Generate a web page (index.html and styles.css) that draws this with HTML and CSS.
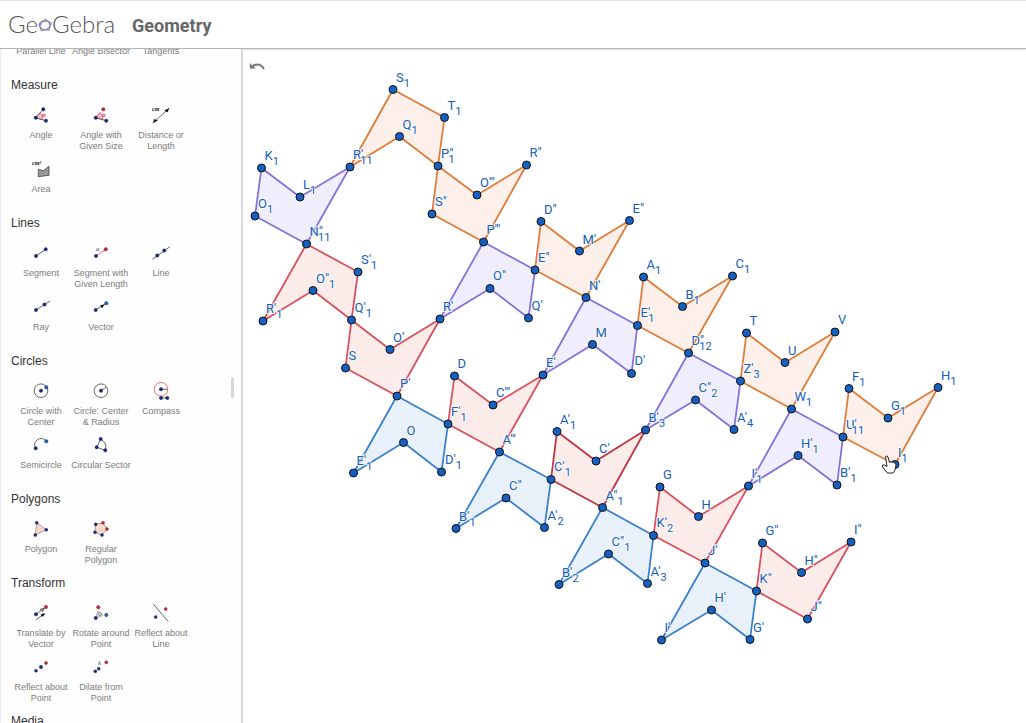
FILE: index.html
```html
<!DOCTYPE html>
<html lang="en">
<head>
<meta charset="utf-8">
<title>GeoGebra Geometry</title>
<link rel="stylesheet" href="styles.css">
</head>
<body>
<header class="topbar">
  <a class="logo" href="#" aria-label="GeoGebra"><span>Ge</span><svg class="logo-mark" viewBox="0 0 14 14" aria-hidden="true"><ellipse cx="7" cy="7.3" rx="5.3" ry="4.6" transform="rotate(-12 7 7.3)"/><circle cx="7.600" cy="2.300" r="1.400"/><circle cx="12.200" cy="5.400" r="1.400"/><circle cx="10.300" cy="11.200" r="1.400"/><circle cx="3.900" cy="11.700" r="1.400"/><circle cx="2" cy="6.200" r="1.400"/></svg><span>Gebra</span></a>
  <h1 class="title">Geometry</h1>
</header>
<div class="workspace">
  <aside class="sidebar">
    <div class="tools">
      <section class="group">
        <div class="grid">
          <button class="tool"><svg class="icon" viewBox="0 0 24 24"></svg>Parallel Line</button>
          <button class="tool"><svg class="icon" viewBox="0 0 24 24"></svg>Angle Bisector</button>
          <button class="tool"><svg class="icon" viewBox="0 0 24 24"></svg>Tangents</button>
        </div>
      </section>
      <section class="group">
        <h2 class="heading">Measure</h2>
        <div class="grid">
          <button class="tool"><svg class="icon" viewBox="0 0 24 24"><path class="pink" d="M6.700 14.700 11 9.500Q14.500 12 13.500 16.800Z"/><path class="ln" d="M14.300 6.300 6.700 14.700 17 17.700"/><circle class="ring" cx="15" cy="12.300" r="1.200"/><circle class="b" cx="14.300" cy="6.300" r="1.700"/><circle class="b" cx="6.700" cy="14.700" r="1.700"/><circle class="b" cx="17" cy="17.700" r="1.700"/></svg>Angle</button>
          <button class="tool"><svg class="icon" viewBox="0 0 24 24"><path class="pink" d="M6.700 14.700 11 9.500Q14.500 12 13.500 16.800Z"/><path class="ln" d="M6.700 14.700 17.300 17.700"/><circle class="ring" cx="15" cy="12.300" r="1.200"/><circle class="r" cx="14.300" cy="6.300" r="1.700"/><circle class="b" cx="6.700" cy="14.700" r="1.700"/><circle class="b" cx="17.300" cy="17.700" r="1.700"/></svg>Angle with Given Size</button>
          <button class="tool"><svg class="icon" viewBox="0 0 24 24"><path class="ln" d="M3.700 20.300 20.300 5"/><path class="k" d="M4 20 5.200 15.900 8.900 17.600ZM20 5.200 18.800 9.200 15.200 7.500Z"/><text class="unit" x="3" y="8">cm</text></svg>Distance or Length</button>
          <button class="tool"><svg class="icon" viewBox="0 0 24 24"><path class="area" d="M9.300 12.300 14.300 13.700 20 9.300V18.300L9.300 19.700Z"/><text class="unit" x="3" y="8">cm²</text></svg>Area</button>
        </div>
      </section>
      <section class="group">
        <h2 class="heading">Lines</h2>
        <div class="grid">
          <button class="tool"><svg class="icon" viewBox="0 0 24 24"><path class="ln" d="M7 15 16.700 8.300"/><circle class="b" cx="7" cy="15" r="1.700"/><circle class="b" cx="16.700" cy="8.300" r="1.700"/></svg>Segment</button>
          <button class="tool"><svg class="icon" viewBox="0 0 24 24"><path class="pl" d="M7 15 16.700 8.300"/><circle class="b" cx="7" cy="15" r="1.700"/><circle class="r" cx="16.700" cy="8.300" r="1.700"/><text class="sym" x="7" y="10">a</text></svg>Segment with Given Length</button>
          <button class="tool"><svg class="icon" viewBox="0 0 24 24"><path class="ln" d="M3.300 18.300 21 5.700"/><circle class="b" cx="8.300" cy="14.500" r="1.700"/><circle class="b" cx="15.300" cy="9.500" r="1.700"/></svg>Line</button>
          <button class="tool"><svg class="icon" viewBox="0 0 24 24"><path class="ln" d="M7 15 21 6"/><circle class="b" cx="7" cy="15" r="1.700"/><circle class="b" cx="15.500" cy="9.500" r="1.700"/></svg>Ray</button>
          <button class="tool"><svg class="icon" viewBox="0 0 24 24"><path class="ln" d="M6.700 15 17.300 8.300"/><path class="k" d="M15.500 9.500 13.200 13.300 11 10.300Z"/><circle class="b" cx="6.700" cy="15" r="1.700"/><circle class="b2" cx="17.300" cy="8.300" r="1.700"/></svg>Vector</button>
        </div>
      </section>
      <section class="group">
        <h2 class="heading">Circles</h2>
        <div class="grid">
          <button class="tool"><svg class="icon" viewBox="0 0 24 24"><circle class="ln" cx="12" cy="11.700" r="6.800"/><circle class="b" cx="12" cy="11.700" r="1.700"/><circle class="b2" cx="17.300" cy="8.300" r="1.700"/></svg>Circle with Center</button>
          <button class="tool"><svg class="icon" viewBox="0 0 24 24"><circle class="ln" cx="12" cy="11.700" r="6.800"/><path class="ln" d="M12 11.700 17.300 8"/><circle class="b" cx="12" cy="11.700" r="1.700"/></svg>Circle: Center &amp; Radius</button>
          <button class="tool"><svg class="icon" viewBox="0 0 24 24"><circle class="rl" cx="12" cy="10.300" r="6.800"/><path class="ln" d="M12 10.300H18.800M12 19H18.300"/><circle class="b" cx="12" cy="10.300" r="1.700"/><circle class="b" cx="12" cy="19" r="1.700"/><circle class="b" cx="18.300" cy="19" r="1.700"/></svg>Compass</button>
          <button class="tool"><svg class="icon" viewBox="0 0 24 24"><path class="ln" d="M6.700 15.300A6.300 6.300 0 0 1 17.300 8.300"/><circle class="b" cx="6.700" cy="15.300" r="1.700"/><circle class="b2" cx="17.300" cy="8.300" r="1.700"/></svg>Semicircle</button>
          <button class="tool"><svg class="icon" viewBox="0 0 24 24"><path class="ln" d="M11.700 6 7.700 14.300 16.300 17.300Q18.500 10 11.700 6Z"/><circle class="b" cx="11.700" cy="6" r="1.700"/><circle class="b" cx="7.700" cy="14.300" r="1.700"/><circle class="b" cx="16.300" cy="17.300" r="1.700"/></svg>Circular Sector</button>
        </div>
      </section>
      <section class="group">
        <h2 class="heading">Polygons</h2>
        <div class="grid">
          <button class="tool"><svg class="icon" viewBox="0 0 24 24"><path class="peach" d="M7.700 5.700 17.300 12.700 6.300 18Z"/><circle class="b" cx="7.700" cy="5.700" r="1.500"/><circle class="b" cx="17.300" cy="12.700" r="1.500"/><circle class="b" cx="6.300" cy="18" r="1.500"/></svg>Polygon</button>
          <button class="tool"><svg class="icon" viewBox="0 0 24 24"><path class="peach" d="M6.700 7.300 14 5.700 18 12 13 18 6 15.300Z"/><circle class="b" cx="6.700" cy="7.300" r="1.500"/><circle class="r" cx="14" cy="5.700" r="1.500"/><circle class="r" cx="18" cy="12" r="1.500"/><circle class="b" cx="13" cy="18" r="1.500"/><circle class="b" cx="6" cy="15.300" r="1.500"/></svg>Regular Polygon</button>
        </div>
      </section>
      <section class="group">
        <h2 class="heading">Transform</h2>
        <div class="grid">
          <button class="tool"><svg class="icon" viewBox="0 0 24 24"><path class="ln" d="M7 13.300 17 6M7 18.700 15.500 12.700"/><path class="area" d="M15 7.500 13.500 10.600 11.300 8.200Z"/><path class="k" d="M16.300 12.200 13.800 16 11.500 13.300Z"/><circle class="b" cx="7" cy="13.300" r="1.700"/><circle class="r" cx="17" cy="6" r="1.700"/></svg>Translate by Vector</button>
          <button class="tool"><svg class="icon" viewBox="0 0 24 24"><path class="angle" d="M6.700 17 8.500 10.500Q13 11 13.500 15Z"/><circle class="ring2" cx="11" cy="13" r="1.500"/><circle class="r" cx="9.300" cy="6.300" r="1.700"/><circle class="b" cx="6.700" cy="17" r="1.700"/><circle class="b2" cx="17.300" cy="14" r="1.700"/></svg>Rotate around Point</button>
          <button class="tool"><svg class="icon" viewBox="0 0 24 24"><path class="ln" d="M4.300 3 19.300 20.700"/><circle class="r" cx="16.700" cy="8" r="1.500"/><circle class="b" cx="6.700" cy="16" r="1.500"/></svg>Reflect about Line</button>
          <button class="tool"><svg class="icon" viewBox="0 0 24 24"><circle class="b" cx="7" cy="15.700" r="1.500"/><circle class="b" cx="12" cy="12" r="1.700"/><circle class="r" cx="17" cy="8" r="1.500"/></svg>Reflect about Point</button>
          <button class="tool"><svg class="icon" viewBox="0 0 24 24"><text class="sym" x="9" y="10">k</text><circle class="b" cx="6.300" cy="16.300" r="1.500"/><circle class="b" cx="9.700" cy="13.700" r="1.500"/><circle class="r" cx="17.300" cy="7.300" r="1.500"/></svg>Dilate from Point</button>
        </div>
      </section>
      <section class="group">
        <h2 class="heading">Media</h2>
      </section>
    </div>
    <span class="thumb"></span>
  </aside>
  <main class="canvas">
    <button class="undo" aria-label="Undo"><svg viewBox="0 0 16 9"><path d="M.5 1 1.200 6.800 6.800 6.300 4.800 4.600C8.500 2.300 12.300 3.600 14 7.600L15.800 7C13.500 1.300 8 0 3.200 3.200Z"/></svg></button>
    <svg class="drawing" role="img" aria-label="Tessellation of concave pentagons">
      <g transform="translate(-243 -49)">
        <g class="orange">
          <path d="M393 89.500 444.500 117.500 438 166 399.500 136.500 350 167Z"/>
          <path d="M438 166 477 195 526.500 165 483.500 242 432 214Z"/>
          <path d="M541 221.500 579.500 251 629.500 220.500 586 297.500 535 270Z"/>
          <path d="M643.500 277 682.500 306.500 732.500 276 688.500 353 637.500 325.500Z"/>
          <path d="M746.500 333 785 362.500 835 332 791.500 409 740.500 381Z"/>
          <path d="M849 388.500 888 418 938 387.500 895 464.500 843 437Z"/>
        </g>
        <g class="purple">
          <path d="M261.500 168 300 197 350 167 306.500 244 255 216Z"/>
          <path d="M483.500 242 535 270 528.500 318 490 288.500 440 319Z"/>
          <path d="M586 297.500 637.500 325.500 631.500 373.500 592.500 344.500 543 375Z"/>
          <path d="M688.500 353 740.500 381 734 429.500 695.500 400 645.500 430Z"/>
          <path d="M791.500 409 843 437 837 485 798 455.500 748.500 486Z"/>
        </g>
        <g class="red">
          <path d="M306.500 244 358 272 351.500 320 313 290.500 263 321Z"/>
          <path d="M351.500 320 390 349.500 440 319 397 396 345.500 368Z"/>
          <path d="M454.500 376 493 405 543 375 499.500 452 448 424Z"/>
          <path d="M660 487 698.500 516.500 748.500 486 705 563 653.500 535.500Z"/>
          <path d="M762.500 543 801.500 572.500 851 542 807.500 619 756.500 591Z"/>
          <path class="dark" d="M557 431.500 596 461 645.500 430 602.500 507.500 551 479.500Z"/>
        </g>
        <g class="blue">
          <path d="M397 396 448 424 441.500 472 403.500 442.500 353.500 473Z"/>
          <path d="M499.500 452 551 479.500 544.500 527.500 506 498 456 528.500Z"/>
          <path d="M602.500 507.500 653.500 535.500 647.500 583.500 608.500 554 559 584.500Z"/>
          <path d="M705 563 756.500 591 750 639.500 711.500 610 661.500 640Z"/>
        </g>
        <g class="labels">
          <text x="396" y="82">S<tspan dy="5">1</tspan></text>
          <text x="447.500" y="110">T<tspan dy="5">1</tspan></text>
          <text x="402.500" y="129">Q<tspan dy="5">1</tspan></text>
          <text x="353" y="159">R'<tspan dy="5" dx="-3">11</tspan></text>
          <text x="441" y="158">P"<tspan dy="5" dx="-5">1</tspan></text>
          <text x="264.500" y="160">K<tspan dy="5">1</tspan></text>
          <text x="303" y="189">L<tspan dy="5">1</tspan></text>
          <text x="258" y="208">O<tspan dy="5">1</tspan></text>
          <text x="309.500" y="236">N"<tspan dy="5" dx="-5">11</tspan></text>
          <text x="435" y="206">S"</text>
          <text x="361" y="264">S'<tspan dy="5">1</tspan></text>
          <text x="316" y="283">O"<tspan dy="5">1</tspan></text>
          <text x="266" y="313">R'<tspan dy="5">1</tspan></text>
          <text x="354.500" y="312">Q'<tspan dy="5">1</tspan></text>
          <text x="393" y="342">O'</text>
          <text x="443" y="311">R'</text>
          <text x="348.500" y="360">S</text>
          <text x="400" y="388">P'</text>
          <text x="457.500" y="368">D</text>
          <text x="451" y="416">F'<tspan dy="5">1</tspan></text>
          <text x="406.500" y="435">O</text>
          <text x="356.500" y="465">E'<tspan dy="5">1</tspan></text>
          <text x="445" y="464">D'<tspan dy="5">1</tspan></text>
          <text x="529.500" y="157">R"</text>
          <text x="480" y="187">O'"</text>
          <text x="486.500" y="234">P'"</text>
          <text x="544" y="214">D"</text>
          <text x="632.500" y="213">E"</text>
          <text x="582.500" y="244">M'</text>
          <text x="538" y="262">E"</text>
          <text x="493" y="280">O"</text>
          <text x="531.500" y="310">Q'</text>
          <text x="589" y="290">N'</text>
          <text x="646.500" y="269">A<tspan dy="5">1</tspan></text>
          <text x="640.500" y="317">E'<tspan dy="5" dx="-2">1</tspan></text>
          <text x="595.500" y="337">M</text>
          <text x="496" y="397">C'"</text>
          <text x="546" y="367">E'</text>
          <text x="634.500" y="365">D'</text>
          <text x="502.500" y="444">A'"</text>
          <text x="560" y="424">A'<tspan dy="5">1</tspan></text>
          <text x="599" y="453">C'</text>
          <text x="648.500" y="422">B'<tspan dy="5">3</tspan></text>
          <text x="554" y="471">C'<tspan dy="5">1</tspan></text>
          <text x="605.500" y="500">A"<tspan dy="5">1</tspan></text>
          <text x="509" y="490">C"</text>
          <text x="459" y="521">B'<tspan dy="5">1</tspan></text>
          <text x="547.500" y="520">A'<tspan dy="5">2</tspan></text>
          <text x="663" y="479">G</text>
          <text x="656.500" y="527">K'<tspan dy="5">2</tspan></text>
          <text x="611.500" y="546">C"<tspan dy="5">1</tspan></text>
          <text x="562" y="577">B'<tspan dy="5">2</tspan></text>
          <text x="650.500" y="576">A'<tspan dy="5">3</tspan></text>
          <text x="685.500" y="299">B<tspan dy="5">1</tspan></text>
          <text x="735.500" y="268">C<tspan dy="5">1</tspan></text>
          <text x="691.500" y="345">D"<tspan dy="5" dx="-5">12</tspan></text>
          <text x="743.500" y="373">Z'<tspan dy="5">3</tspan></text>
          <text x="698.500" y="392">C"<tspan dy="5">2</tspan></text>
          <text x="737" y="422">A'<tspan dy="5">4</tspan></text>
          <text x="749.500" y="325">T</text>
          <text x="788" y="355">U</text>
          <text x="838" y="324">V</text>
          <text x="794.500" y="401">W<tspan dy="5">1</tspan></text>
          <text x="801" y="448">H'<tspan dy="5">1</tspan></text>
          <text x="751.500" y="478">I'<tspan dy="5" dx="-1">1</tspan></text>
          <text x="846" y="429">U'<tspan dy="5" dx="-5">11</tspan></text>
          <text x="840" y="477">B'<tspan dy="5">1</tspan></text>
          <text x="701.500" y="509">H</text>
          <text x="708" y="555">J'</text>
          <text x="765.500" y="535">G"</text>
          <text x="804.500" y="565">H"</text>
          <text x="854" y="534">I"</text>
          <text x="759.500" y="583">K"</text>
          <text x="810.500" y="611">J"</text>
          <text x="714.500" y="602">H'</text>
          <text x="753" y="632">G'</text>
          <text x="664.500" y="632">I'</text>
          <text x="852" y="381">F<tspan dy="5">1</tspan></text>
          <text x="891" y="410">G<tspan dy="5">1</tspan></text>
          <text x="941" y="380">H<tspan dy="5">1</tspan></text>
          <text x="898" y="457">I<tspan dy="5">1</tspan></text>
        </g>
        <g class="points">
          <circle cx="393" cy="89.500" r="4"/><circle cx="444.500" cy="117.500" r="4"/><circle cx="399.500" cy="136.500" r="4"/>
          <circle cx="350" cy="167" r="4"/><circle cx="438" cy="166" r="4"/><circle cx="261.500" cy="168" r="4"/>
          <circle cx="300" cy="197" r="4"/><circle cx="255" cy="216" r="4"/><circle cx="306.500" cy="244" r="4"/>
          <circle cx="432" cy="214" r="4"/><circle cx="358" cy="272" r="4"/><circle cx="313" cy="290.500" r="4"/>
          <circle cx="263" cy="321" r="4"/><circle cx="351.500" cy="320" r="4"/><circle cx="390" cy="349.500" r="4"/>
          <circle cx="440" cy="319" r="4"/><circle cx="345.500" cy="368" r="4"/><circle cx="397" cy="396" r="4"/>
          <circle cx="454.500" cy="376" r="4"/><circle cx="448" cy="424" r="4"/><circle cx="403.500" cy="442.500" r="4"/>
          <circle cx="353.500" cy="473" r="4"/><circle cx="441.500" cy="472" r="4"/><circle cx="526.500" cy="165" r="4"/>
          <circle cx="477" cy="195" r="4"/><circle cx="483.500" cy="242" r="4"/><circle cx="541" cy="221.500" r="4"/>
          <circle cx="629.500" cy="220.500" r="4"/><circle cx="579.500" cy="251" r="4"/><circle cx="535" cy="270" r="4"/>
          <circle cx="490" cy="288.500" r="4"/><circle cx="528.500" cy="318" r="4"/><circle cx="586" cy="297.500" r="4"/>
          <circle cx="643.500" cy="277" r="4"/><circle cx="637.500" cy="325.500" r="4"/><circle cx="592.500" cy="344.500" r="4"/>
          <circle cx="493" cy="405" r="4"/><circle cx="543" cy="375" r="4"/><circle cx="631.500" cy="373.500" r="4"/>
          <circle cx="499.500" cy="452" r="4"/><circle cx="557" cy="431.500" r="4"/><circle cx="596" cy="461" r="4"/>
          <circle cx="645.500" cy="430" r="4"/><circle cx="551" cy="479.500" r="4"/><circle cx="602.500" cy="507.500" r="4"/>
          <circle cx="506" cy="498" r="4"/><circle cx="456" cy="528.500" r="4"/><circle cx="544.500" cy="527.500" r="4"/>
          <circle cx="660" cy="487" r="4"/><circle cx="653.500" cy="535.500" r="4"/><circle cx="608.500" cy="554" r="4"/>
          <circle cx="559" cy="584.500" r="4"/><circle cx="647.500" cy="583.500" r="4"/><circle cx="682.500" cy="306.500" r="4"/>
          <circle cx="732.500" cy="276" r="4"/><circle cx="688.500" cy="353" r="4"/><circle cx="740.500" cy="381" r="4"/>
          <circle cx="695.500" cy="400" r="4"/><circle cx="734" cy="429.500" r="4"/><circle cx="746.500" cy="333" r="4"/>
          <circle cx="785" cy="362.500" r="4"/><circle cx="835" cy="332" r="4"/><circle cx="791.500" cy="409" r="4"/>
          <circle cx="798" cy="455.500" r="4"/><circle cx="748.500" cy="486" r="4"/><circle cx="843" cy="437" r="4"/>
          <circle cx="837" cy="485" r="4"/><circle cx="698.500" cy="516.500" r="4"/><circle cx="705" cy="563" r="4"/>
          <circle cx="762.500" cy="543" r="4"/><circle cx="801.500" cy="572.500" r="4"/><circle cx="851" cy="542" r="4"/>
          <circle cx="756.500" cy="591" r="4"/><circle cx="807.500" cy="619" r="4"/><circle cx="711.500" cy="610" r="4"/>
          <circle cx="750" cy="639.500" r="4"/><circle cx="661.500" cy="640" r="4"/><circle cx="849" cy="388.500" r="4"/>
          <circle cx="888" cy="418" r="4"/><circle cx="938" cy="387.500" r="4"/><circle cx="895" cy="464.500" r="4"/>
        </g>
        <path class="hand" d="M885.500 456.500Q887 455 888 457L889.500 462.500Q890.500 461 892 462.300 893.500 461.500 894.300 463 896 462.500 896 465L895 470 893 473H887.500L882.500 467Q881.500 464.500 884 464.800L887 466.500Z"/>
      </g>
    </svg>
  </main>
</div>
</body>
</html>
```
FILE: styles.css
```css
* { box-sizing: border-box; }
body {
  margin: 0;
  height: 100vh;
  display: flex;
  flex-direction: column;
  overflow: hidden;
  background: #fff;
  font-family: "Liberation Sans", Arial, sans-serif;
}
button {
  padding: 0;
  border: 0;
  background: none;
  font: inherit;
  color: inherit;
}
.topbar {
  position: relative;
  z-index: 1;
  flex: none;
  display: flex;
  align-items: center;
  gap: 17px;
  height: 49px;
  padding: 2px 8px 0;
  background: #fff;
  border-top: 1px solid #dce2f2;
  border-bottom: 1px solid #b4b4b4;
  box-shadow: 0 1px 2px #ddd;
}
.logo {
  display: flex;
  align-items: center;
  padding-bottom: 4px;
  font: 300 24px/28px Lato, sans-serif;
  color: #555;
  text-decoration: none;
}
.logo-mark { width: 14px; height: 14px; margin-top: 3px; }
.logo-mark ellipse { fill: none; stroke: #666; stroke-width: 1.2; }
.logo-mark circle { fill: #9999ff; stroke: #777; stroke-width: .4; }
.title {
  margin: 0;
  font: 700 18px/28px Roboto, sans-serif;
  color: #666;
}
.workspace { flex: 1; min-height: 0; display: flex; }
.sidebar {
  position: relative;
  z-index: 1;
  flex: none;
  width: 243px;
  overflow: hidden;
  background: #fefefe;
  border-left: 1px solid #eee;
  border-right: 2px solid #d8dade;
}
.tools { margin-top: -33px; padding-left: 10px; }
.heading {
  margin: 0;
  font: 400 12px/30px "Liberation Sans", Arial, sans-serif;
  color: #333;
}
.grid { display: grid; grid-template-columns: repeat(3, 60px); grid-auto-rows: 54px; }
.tool {
  display: flex;
  flex-direction: column;
  align-items: center;
  justify-content: flex-start;
  padding-top: 3px;
  font-size: 9px;
  line-height: 11px;
  color: #7c7c7c;
}
.icon { flex: none; width: 24px; height: 24px; margin-bottom: 3px; }
.ln { fill: none; stroke: #666; stroke-width: 1; }
.pl { stroke: #f06aa0; stroke-width: 1; }
.rl { fill: none; stroke: #e57373; }
.pink { fill: #f8c0c8; stroke: #dc3050; stroke-width: .8; }
.peach { fill: #f7d9d0; stroke: #a08880; stroke-width: .8; }
.angle { fill: #ddd; stroke: #888; stroke-width: .6; }
.ring { fill: #fff; stroke: #d02040; stroke-width: .8; }
.ring2 { fill: #eee; stroke: #777; stroke-width: .8; }
.area { fill: #999; stroke: #444; stroke-width: .8; }
.b { fill: #1b2a86; stroke: #111a44; stroke-width: .4; }
.b2 { fill: #1565c0; stroke: #123; stroke-width: .4; }
.r { fill: #c8283c; stroke: #601020; stroke-width: .4; }
.k { fill: #111; }
.unit { font: italic 700 6px "Liberation Serif", serif; fill: #111; }
.sym { font: italic 7px "Liberation Serif", serif; fill: #555; }
.thumb {
  position: absolute;
  right: 7px;
  top: 328px;
  width: 3px;
  height: 21px;
  border-radius: 2px;
  background: #d6d6da;
}
.canvas { position: relative; flex: 1; min-width: 0; background: #fff; }
.drawing { display: block; width: 100%; height: 100%; }
.undo { position: absolute; left: 6px; top: 12px; width: 16px; height: 10px; }
.undo svg { display: block; width: 16px; height: 9px; fill: #757575; }
.orange { fill: #fdf0ea; stroke: #e07c38; }
.purple { fill: #f0eefc; stroke: #8572d8; }
.red { fill: #fbecea; stroke: #d9505e; }
.blue { fill: #e8f0fa; stroke: #3c80cc; }
.dark { stroke: #bf3542; }
.orange, .purple, .red, .blue { stroke-width: 1.8; stroke-linejoin: round; }
.labels {
  font: 400 13px Roboto, sans-serif;
  fill: #1560b8;
  stroke: #fff;
  stroke-opacity: .8;
  stroke-width: 2;
  paint-order: stroke;
}
.labels tspan { font-size: 11px; }
.points { fill: #1560c0; stroke: #111; stroke-width: 1; }
.hand { fill: #fff; stroke: #222; stroke-width: 1; stroke-linejoin: round; }
```
